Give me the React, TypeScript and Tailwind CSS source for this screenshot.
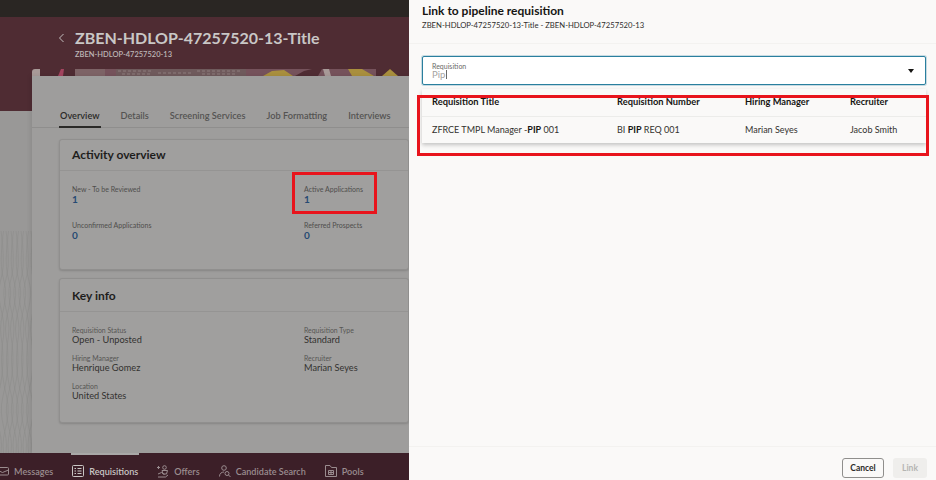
import React from "react";

function Stat({ label, value }: { label: string; value: string }) {
  return (
    <div>
      <div className="text-[7px] leading-[10px] text-[#4f4e4c]">{label}</div>
      <div className="text-[10px] leading-[10px] font-bold text-[#264a73]">{value}</div>
    </div>
  );
}

function Info({ label, value }: { label: string; value: string }) {
  return (
    <div>
      <div className="text-[6.9px] leading-[9px] text-[#575654]">{label}</div>
      <div className="text-[9.2px] leading-[10px] text-[#333230]">{value}</div>
    </div>
  );
}

function NavItem({ label, icon, active }: { label: string; icon: React.ReactNode; active?: boolean }) {
  return (
    <div className="flex items-center gap-[5px]">
      {icon}
      <span className={active ? "text-[9.1px] font-semibold text-[#c9c6c4]" : "text-[9.1px] font-semibold text-[#9a8c8f]"}>{label}</span>
    </div>
  );
}

const topo = Array.from({ length: 13 }, (_, i) => {
  const x = 1 + i * 2.5;
  const w = i % 2 === 0 ? 3 : -3;
  return `M${x} 120 C${x + w} 135 ${x - w} 150 ${x + w} 170 S${x - w} 205 ${x} 225 S${x + w} 260 ${x - w} 285 S${x + w} 320 ${x} 342`;
});

export default function App() {
  const s = { fill: "none", stroke: "#9a8c8f", strokeWidth: 1 };
  return (
    <div className="relative flex h-[480px] w-[936px] overflow-hidden bg-[#faf9f8] font-['Lato','Open_Sans',sans-serif]">
      <div className="flex h-full w-[409px] shrink-0 flex-col overflow-hidden bg-[#999897]">
        <div className="h-[17px] shrink-0 bg-[#2a2623]" />
        <div className="relative flex-1 overflow-hidden">
          <div className="h-[94px] bg-[#4f2c33] pl-[58px] pt-[9px]">
            <div className="flex items-center">
              <svg width="8" height="10" viewBox="0 0 8 10" className="mr-[9px]">
                <path d="M5.5 1 L1.5 5 L5.5 9" fill="none" stroke="#c4bfbf" strokeWidth="1" />
              </svg>
              <span className="text-[16px] leading-[24px] font-bold whitespace-nowrap text-[#c9c7c6]">ZBEN-HDLOP-47257520-13-Title</span>
            </div>
            <div className="ml-[17px] text-[7.5px] leading-[10px] font-semibold text-[#bdb6b6]">ZBEN-HDLOP-47257520-13</div>
          </div>
          <svg width="32" height="342" viewBox="0 0 32 342" className="absolute left-0 top-[94px]">
            {topo.map((d, i) => (
              <path key={i} d={d} fill="none" stroke="#8b8a89" strokeWidth="0.5" />
            ))}
          </svg>
          <div className="absolute left-[32px] top-[52px] h-[7px] w-[377px] overflow-hidden rounded-t-[3px] bg-[#4f2c33]">
            <svg width="377" height="7" viewBox="0 0 377 7" className="block">
              <rect x="0" width="8" height="7" fill="#a89a98" />
              <path d="M26 7 L29 0 L32 0 L31 7 Z" fill="#a3445f" />
              <rect x="43" width="171" height="7" fill="#75525b" />
              <rect x="43" width="30" height="7" fill="#7d6366" />
              <rect x="84" width="130" height="7" fill="#6f5a5c" />
              <path d="M86 2 H120 M126 4 H160 M90 5 H118 M165 2 H210 M170 5 H205" stroke="#8d7d7c" strokeWidth="1" strokeDasharray="3 2" />
              <rect x="214" width="130" height="7" fill="#75525b" />
              <path d="M231 7 L240 2 L252 1 L261 7 Z" fill="#a98f3d" />
              <path d="M263 7 L272 2 L280 0 L290 0 L286 7 Z" fill="#4f2c33" />
              <path d="M291 0 L297 0 L299 7 L293 7 Z" fill="#a89a98" />
              <path d="M316 0 L330 0 L342 7 L320 7 Z" fill="#a98f3d" />
              <path d="M350 7 L358 0 L366 7 Z" fill="#a98f3d" />
            </svg>
          </div>
          <div className="absolute left-[32px] top-[59px] bottom-0 w-[377px] bg-[#9e9d9c] shadow-[-2px_0_4px_rgba(0,0,0,0.08)]">
            <div className="flex h-[52px] gap-[21px] border-b border-[#8f8e8d] pl-[28px] pt-[31px] text-[9.2px] leading-[18px] font-semibold text-[#545352]">
              <span className="relative h-[21px] text-[#2b2a28]">
                Overview
                <span className="absolute -left-[1px] -right-[1px] bottom-0 h-[2px] bg-[#2b2a28]" />
              </span>
              <span>Details</span>
              <span>Screening Services</span>
              <span>Job Formatting</span>
              <span>Interviews</span>
            </div>
            <div className="ml-[27px] mt-[11px] h-[131px] rounded-[3px] border border-[#908f8e] bg-[#a09f9e] shadow-[0_1px_2px_rgba(0,0,0,0.15)]">
              <div className="flex h-[31px] items-center border-b border-[#959493] pl-[12px] text-[12px] font-bold text-[#1e1d1c]">Activity overview</div>
              <div className="grid grid-cols-[232px_1fr] gap-y-[16px] pl-[12px] pt-[13px]">
                <Stat label="New - To be Reviewed" value="1" />
                <Stat label="Active Applications" value="1" />
                <Stat label="Unconfirmed Applications" value="0" />
                <Stat label="Referred Prospects" value="0" />
              </div>
            </div>
            <div className="ml-[27px] mt-[8px] h-[145px] rounded-[3px] border border-[#908f8e] bg-[#a09f9e] shadow-[0_1px_2px_rgba(0,0,0,0.15)]">
              <div className="flex h-[33px] items-center border-b border-[#959493] pl-[12px] pt-[2px] text-[12px] font-bold text-[#1e1d1c]">Key info</div>
              <div className="grid grid-cols-[232px_1fr] gap-y-[9px] pl-[12px] pt-[14px]">
                <Info label="Requisition Status" value="Open - Unposted" />
                <Info label="Requisition Type" value="Standard" />
                <Info label="Hiring Manager" value="Henrique Gomez" />
                <Info label="Recruiter" value="Marian Seyes" />
                <Info label="Location" value="United States" />
              </div>
            </div>
          </div>
        </div>
        <div className="relative flex h-[27px] shrink-0 items-center gap-[19px] bg-[#3c1f28] pt-[10px]">
          <div className="absolute left-[71px] top-0 h-[2px] w-[68px] bg-[#a9a8a7]" />
          <NavItem
            label="Messages"
            icon={
              <svg width="9" height="12" viewBox="0 0 9 12">
                <path d="M-3 2.5 H7.5 a1 1 0 0 1 1 1 V9 a1 1 0 0 1 -1 1 H-3 M-3 5 L2.5 7.5 L8.5 5" {...s} />
              </svg>
            }
          />
          <div className="flex gap-[19px]">
            <NavItem
              active
              label="Requisitions"
              icon={
                <svg width="12" height="12" viewBox="0 0 12 12" fill="none" stroke="#c9c6c4" strokeWidth="1">
                  <rect x="0.5" y="0.5" width="11" height="11" rx="1" />
                  <path d="M2.5 3.5 H4 M5.5 3.5 H9.5 M2.5 6 H4 M5.5 6 H9.5 M2.5 8.5 H4 M5.5 8.5 H9.5" />
                </svg>
              }
            />
            <NavItem
              label="Offers"
              icon={
                <svg width="12" height="13" viewBox="0 0 12 13" {...s}>
                  <path d="M1.5 1 V4 M0 2.5 H3" />
                  <circle cx="7.5" cy="2.5" r="1.8" />
                  <path d="M5 5.5 H10.5 L9.5 9 H6 Z" />
                  <path d="M1 9 L4.5 7.5 L7.5 9.5 M1 12 H8.5 L11 10" />
                </svg>
              }
            />
            <NavItem
              label="Candidate Search"
              icon={
                <svg width="12" height="13" viewBox="0 0 12 13" {...s}>
                  <circle cx="5" cy="3" r="2.3" />
                  <path d="M0.5 11.5 C0.5 8.5 2.5 7 5 7" />
                  <circle cx="8" cy="8.5" r="2" />
                  <path d="M9.5 10 L11.5 12" />
                </svg>
              }
            />
            <NavItem
              label="Pools"
              icon={
                <svg width="12" height="12" viewBox="0 0 12 12" {...s}>
                  <path d="M0.5 11.5 V0.5 H5 L6.5 2.5 H11.5 V11.5 Z" />
                  <path d="M3.5 5.5 H8.5 V9.5 H3.5 Z M6 5.5 V9.5 M3.5 7.5 H8.5" />
                </svg>
              }
            />
          </div>
        </div>
      </div>

      <div className="flex h-full flex-1 flex-col bg-[#faf9f8] text-[#161513]">
        <div className="h-[44px] shrink-0 border-b border-[#f3f2f0] pl-[13px] pt-[3px]">
          <div className="text-[12px] leading-[15px] font-bold">Link to pipeline requisition</div>
          <div className="mt-[1px] text-[7.7px] leading-[12px] text-[#2f2e2c]">ZBEN-HDLOP-47257520-13-Title - ZBEN-HDLOP-47257520-13</div>
        </div>
        <div className="flex-1 pl-[13px] pr-[10px] pt-[12px]">
          <div className="flex h-[29px] items-center justify-between rounded-[2px] border border-[#2a7f9e] bg-white pl-[9px] pr-[11px] shadow-[0_0_0_1px_rgba(42,127,158,0.25)]">
            <div>
              <div className="text-[7px] leading-[8px] text-[#6b6a68]">Requisition</div>
              <div className="flex items-center text-[9.5px] leading-[10px] text-[#a3a2a0]">
                Pip<span className="ml-[1px] h-[9px] w-px bg-[#6b6a68]" />
              </div>
            </div>
            <svg width="6" height="4" viewBox="0 0 6 4">
              <path d="M0 0 H6 L3 4 Z" fill="#161513" />
            </svg>
          </div>
          <div className="mt-[4px] bg-[#faf9f8] shadow-[0_2px_4px_rgba(0,0,0,0.22)]">
            <div className="grid h-[28px] grid-cols-[185px_128px_105px_1fr] items-center border-b border-[#ececea] pb-[2px] pl-[10px] text-[9.3px] font-bold">
              <span>Requisition Title</span>
              <span>Requisition Number</span>
              <span>Hiring Manager</span>
              <span>Recruiter</span>
            </div>
            <div className="grid h-[26px] grid-cols-[185px_128px_105px_1fr] items-center pl-[10px] text-[9px] text-[#33322f]">
              <span>
                ZFRCE TMPL Manager -<b className="text-[#161513]">PIP</b> 001
              </span>
              <span>
                BI <b className="text-[#161513]">PIP</b> REQ 001
              </span>
              <span>Marian Seyes</span>
              <span>Jacob Smith</span>
            </div>
          </div>
        </div>
        <div className="flex h-[34px] shrink-0 justify-end gap-[9px] border-t border-[#f3f2f0] pr-[9px] pt-[11px]">
          <div className="flex h-[20px] w-[42px] items-center justify-center rounded-[3px] border border-[#8f8e8c] bg-[#faf9f8] text-[8.5px] font-bold text-[#2b2a28]">Cancel</div>
          <div className="flex h-[20px] w-[34px] items-center justify-center rounded-[3px] bg-[#efeeec] text-[8.5px] font-bold text-[#b5b4b2]">Link</div>
        </div>
      </div>

      <div className="pointer-events-none absolute left-[292px] top-[172px] h-[42px] w-[85px] border-[3px] border-[#e8141c]" />
      <div className="pointer-events-none absolute left-[417px] top-[95px] h-[61px] w-[512px] border-[3px] border-[#e8141c]" />
    </div>
  );
}
